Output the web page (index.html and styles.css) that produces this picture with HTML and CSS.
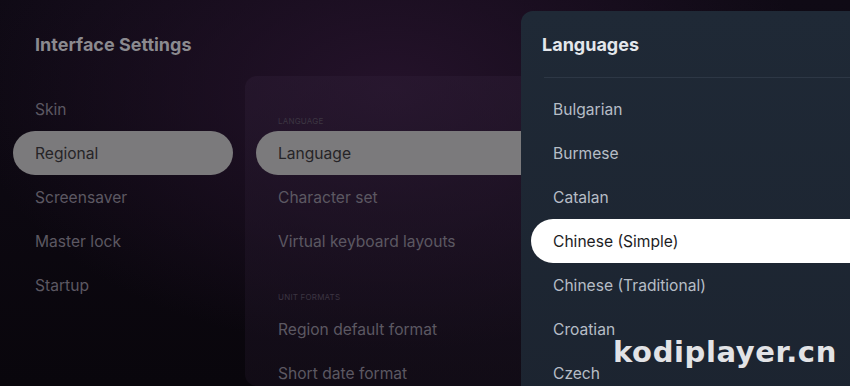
FILE: index.html
```html
<html>
<head>
<meta charset="utf-8">
<title>Interface Settings</title>
<link rel="stylesheet" href="styles.css">
</head>
<body>

<div class="page">

	<!-- 左側選單 -->
	<div class="sidebar">
		<div class="title">Interface Settings</div>
		<div class="item">Skin</div>
		<div class="item active">Regional</div>
		<div class="item">Screensaver</div>
		<div class="item">Master lock</div>
		<div class="item">Startup</div>
	</div>

	<!-- 中間設定面板 -->
	<div class="panel">
		<div class="label first">LANGUAGE</div>
		<div class="item active">Language</div>
		<div class="item">Character set</div>
		<div class="item">Virtual keyboard layouts</div>
		<div class="label">UNIT FORMATS</div>
		<div class="item">Region default format</div>
		<div class="item">Short date format</div>
	</div>

	<!-- 右側語言對話框 -->
	<div class="dialog">
		<div class="dialog_title">Languages</div>
		<div class="divider"></div>
		<div class="lang">Bulgarian</div>
		<div class="lang">Burmese</div>
		<div class="lang">Catalan</div>
		<div class="lang selected">Chinese (Simple)</div>
		<div class="lang">Chinese (Traditional)</div>
		<div class="lang">Croatian</div>
		<div class="lang">Czech</div>
	</div>

	<div class="watermark">kodiplayer.cn</div>

</div>

</body>
</html>
```

FILE: styles.css
```css
	body{
		margin: 0px;
		padding: 0px;
		background-color: #0b0710;
		font-family: Inter, "Liberation Sans", sans-serif;
	}

	.page{
		position: relative;
		width: 850px;
		height: 386px;
		overflow: hidden;
		display: flex;
		background: radial-gradient(ellipse 420px 260px at 390px 90px, #24122a 0%, rgba(36,18,42,0) 100%),
				linear-gradient(180deg, #0f0a15 0%, #09060c 100%);
	}

	/* 左側選單 */
	.sidebar{
		width: 245px;
		flex-shrink: 0;
	}

	.sidebar .title{
		height: 87px;
		line-height: 89px;
		padding-left: 35px;
		font-size: 18px;
		font-weight: bold;
		color: #8b8a8f;
	}

	.item{
		height: 44px;
		line-height: 46px;
		border-radius: 22px;
		padding-left: 22px;
		font-size: 15.6px;
		color: #5c5862;
		white-space: nowrap;
	}

	.sidebar .item{
		margin-left: 13px;
		width: 198px;
	}

	.item.active{
		background-color: #7b7a7c;
		color: #262427;
	}

	/* 中間面板 */
	.panel{
		margin-top: 76px;
		width: 320px;
		flex-shrink: 0;
		border-radius: 12px;
		background: linear-gradient(180deg, rgba(44,28,52,0.5) 0%, rgba(24,16,30,0.55) 100%);
	}

	.panel .item{
		margin-left: 11px;
	}

	.label{
		height: 44px;
		box-sizing: border-box;
		padding-left: 33px;
		padding-bottom: 5px;
		display: flex;
		align-items: flex-end;
		font-size: 8px;
		letter-spacing: 0.2px;
		color: #3c3542;
	}

	.label.first{
		height: 55px;
	}

	/* 右側對話框 */
	.dialog{
		position: absolute;
		left: 521px;
		top: 11px;
		width: 360px;
		height: 400px;
		border-radius: 12px;
		background: linear-gradient(180deg, #1f2936 0%, #1c2430 100%);
	}

	.dialog_title{
		height: 44px;
		line-height: 45px;
		margin-top: 11px;
		padding-left: 21px;
		font-size: 18px;
		font-weight: bold;
		color: #e4e7ec;
	}

	.divider{
		margin-top: 11px;
		margin-left: 23px;
		height: 1px;
		background-color: #2d3745;
	}

	.lang{
		height: 44px;
		line-height: 46px;
		margin-left: 10px;
		padding-left: 22px;
		border-radius: 22px 0 0 22px;
		font-size: 15.6px;
		color: #b6bdc6;
	}

	.divider + .lang{
		margin-top: 9px;
	}

	.lang.selected{
		background-color: #ffffff;
		color: #1d1d1f;
	}

	/* 浮水印 */
	.watermark{
		position: absolute;
		left: 613px;
		top: 335px;
		font-family: "DejaVu Sans", sans-serif;
		font-weight: bold;
		font-size: 29px;
		letter-spacing: 0.6px;
		color: #e2e3e6;
	}
```
